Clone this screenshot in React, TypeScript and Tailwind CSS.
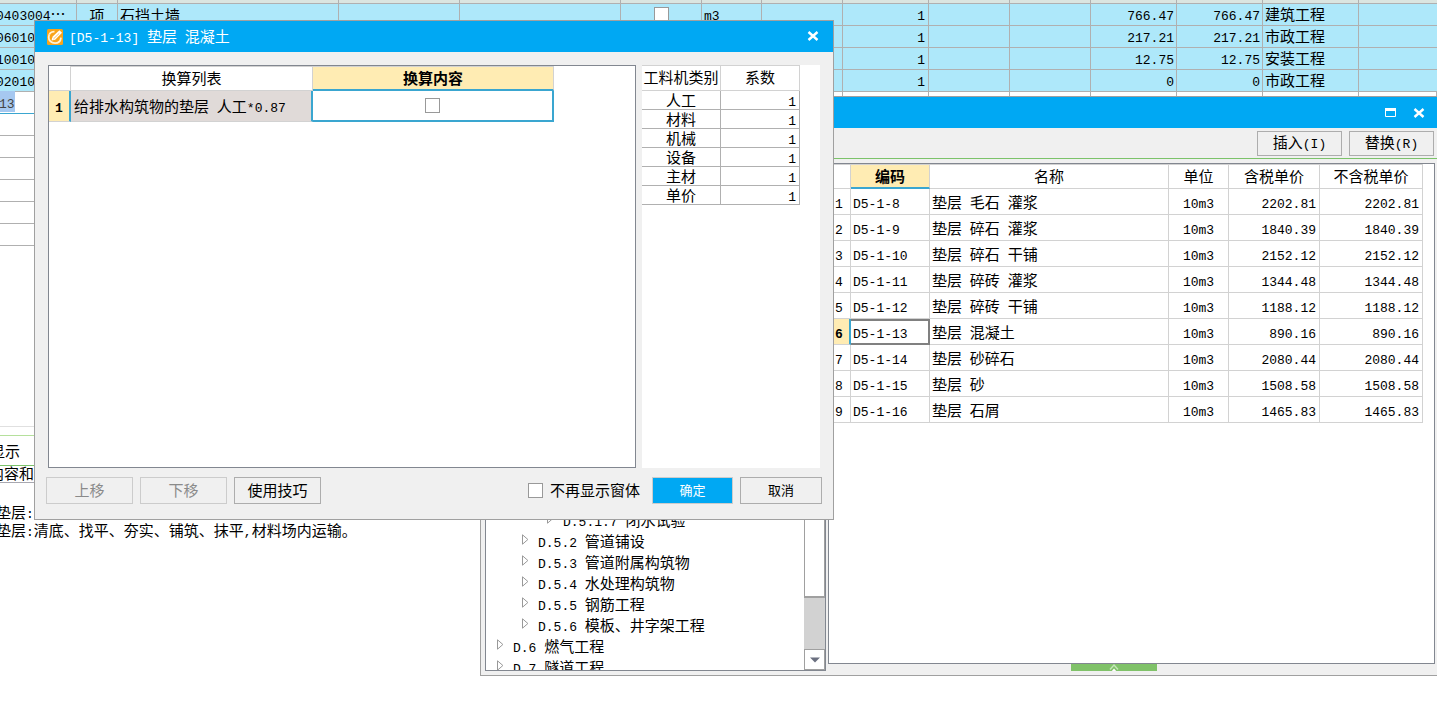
import React from "react";

/** Sets Latin runs in a half-width face so that they keep the pitch of the Chinese text. */
function T({ children }: { children: string }) {
  const runs = children.match(/[\x20-\x7e]+|[^\x20-\x7e]+/g) ?? [];
  return (
    <span className="whitespace-pre">
      {runs.map((run, i) =>
        /^[\x20-\x7e]/.test(run) ? (
          <span key={i} className="font-['Liberation_Mono',monospace] text-[13px] leading-none">
            {run}
          </span>
        ) : (
          run
        )
      )}
    </span>
  );
}

function CloseIcon() {
  return (
    <svg width="12" height="10" viewBox="0 0 12 10" fill="none" stroke="#fff" strokeWidth="2.4">
      <path d="M1.5 1 L10.5 9 M10.5 1 L1.5 9" />
    </svg>
  );
}

type SheetRow = {
  code: string;
  kind?: string;
  name?: string;
  check?: boolean;
  unit?: string;
  qty: string;
  price: string;
  total: string;
  type: string;
};

const sheetRows: SheetRow[] = [
  { code: "0403004⋯", kind: "项", name: "石挡土墙", check: true, unit: "m3", qty: "1", price: "766.47", total: "766.47", type: "建筑工程" },
  { code: "06010", qty: "1", price: "217.21", total: "217.21", type: "市政工程" },
  { code: "10010", qty: "1", price: "12.75", total: "12.75", type: "安装工程" },
  { code: "02010", qty: "1", price: "0", total: "0", type: "市政工程" },
];

const emptyCells = Array.from({ length: 14 }, (_, i) => i);

function Worksheet() {
  const cell = "h-[22px] overflow-hidden border-r border-b border-[#b0b0b0] p-0";
  return (
    <table className="w-full table-fixed border-separate border-spacing-0 text-[15px] leading-4">
      <colgroup>
        <col className="w-[77px]" />
        <col className="w-[41px]" />
        <col className="w-[221px]" />
        <col className="w-[121px]" />
        <col className="w-[161px]" />
        <col className="w-[81px]" />
        <col className="w-[60px]" />
        <col className="w-[81px]" />
        <col className="w-[86px]" />
        <col className="w-[81px]" />
        <col className="w-[81px]" />
        <col className="w-[86px]" />
        <col className="w-[86px]" />
        <col className="w-[96px]" />
        <col />
      </colgroup>
      <tbody>
        <tr className="bg-[#dbe5e0]">
          {emptyCells.map((i) => (
            <td key={i} className="h-1 border-r border-b border-[#b0b0b0] p-0" />
          ))}
          <td className="h-1 border-b border-[#b0b0b0] p-0" />
        </tr>
        {sheetRows.map((r) => (
          <tr key={r.code} className="bg-[#aee8fa]">
            <td className={cell}>
              <div className="-ml-1">
                <T>{r.code}</T>
              </div>
            </td>
            <td className={`${cell} text-center`}>{r.kind}</td>
            <td className={`${cell} pl-0.5`}>{r.name}</td>
            <td className={cell} />
            <td className={cell} />
            <td className={cell}>
              {r.check && (
                <input
                  type="checkbox"
                  aria-label="选择"
                  className="mx-auto block size-[15px] appearance-none border border-[#999] bg-white"
                />
              )}
            </td>
            <td className={`${cell} pl-0.5`}>
              <T>{r.unit ?? ""}</T>
            </td>
            <td className={cell} />
            <td className={`${cell} pr-[3px] text-right`}>
              <T>{r.qty}</T>
            </td>
            <td className={cell} />
            <td className={cell} />
            <td className={`${cell} pr-0.5 text-right`}>
              <T>{r.price}</T>
            </td>
            <td className={`${cell} pr-0.5 text-right`}>
              <T>{r.total}</T>
            </td>
            <td className={`${cell} pb-0.5 pl-0.5`}>{r.type}</td>
            <td className="h-[22px] border-b border-[#b0b0b0] p-0" />
          </tr>
        ))}
        <tr>
          <td className="h-[22px] border-r border-b border-r-[#b0b0b0] border-b-[#3aa6d0] p-0">
            <span className="-ml-px bg-[#a6c8f0] text-[#444]">
              <T>13</T>
            </span>
          </td>
          {emptyCells.map((i) => (
            <td key={i} className={cell} />
          ))}
        </tr>
        {[1, 2, 3, 4, 5, 6].map((n) => (
          <tr key={n}>
            <td className={cell} />
            {emptyCells.map((i) => (
              <td key={i} className={cell} />
            ))}
          </tr>
        ))}
      </tbody>
    </table>
  );
}

function WorkNotes() {
  return (
    <div className="w-[480px] text-[15px]">
      <div className="h-[181px] border-b border-[#e0e0e0]" />
      <div className="h-[9px] border-b border-[#b5e09c]" />
      <div className="flex h-[30px] items-center border-b border-[#7cc36a] pt-0.5">
        <span className="-ml-2.5">显示</span>
      </div>
      <div className="flex h-[17px] items-center border-b border-[#a8a8b0] pb-1 leading-none">
        <span className="-ml-[11px]">内容和</span>
      </div>
      <div className="-ml-1 pt-5 leading-[17px]">
        <p>
          <T>垫层:</T>
        </p>
        <p>
          <T>垫层:清底、找平、夯实、铺筑、抹平,材料场内运输。</T>
        </p>
      </div>
    </div>
  );
}

const treeNodes = [
  { code: "D.5.1.7", label: "闭水试验", indent: "pl-[61px]" },
  { code: "D.5.2", label: "管道铺设", indent: "pl-9" },
  { code: "D.5.3", label: "管道附属构筑物", indent: "pl-9" },
  { code: "D.5.4", label: "水处理构筑物", indent: "pl-9" },
  { code: "D.5.5", label: "钢筋工程", indent: "pl-9" },
  { code: "D.5.6", label: "模板、井字架工程", indent: "pl-9" },
  { code: "D.6", label: "燃气工程", indent: "pl-[11px]" },
  { code: "D.7", label: "隧道工程", indent: "pl-[11px]" },
];

function ChapterTree() {
  return (
    <div className="flex w-[341px] border border-[#828790] bg-white">
      <div className="flex min-w-0 flex-1 flex-col justify-end overflow-hidden">
        <ul className="-mb-2">
          {treeNodes.map((n) => (
            <li key={n.code} className={`flex h-[21px] items-center gap-[9px] pb-0.5 leading-5 ${n.indent}`}>
              <svg width="7" height="11" viewBox="0 0 7 11" fill="none" stroke="#999" className="mb-0.5 shrink-0">
                <path d="M0.5 0.8 V10.2 L5.9 5.5 Z" />
              </svg>
              <T>{`${n.code} ${n.label}`}</T>
            </li>
          ))}
        </ul>
      </div>
      <div className="flex w-[21px] flex-col bg-[#d2d2d2]">
        <div className="flex-1 border border-b-2 border-[#a0a0a0] bg-white" />
        <div className="h-[51px]" />
        <button type="button" aria-label="向下滚动" className="grid h-[21px] place-items-center border border-[#a0a0a0] bg-white">
          <svg width="10" height="6" viewBox="0 0 10 6" fill="#6b7080">
            <path d="M0 0.5 H10 L5 5.5 Z" />
          </svg>
        </button>
      </div>
    </div>
  );
}

const quotas = [
  ["D5-1-8", "垫层 毛石 灌浆", "2202.81"],
  ["D5-1-9", "垫层 碎石 灌浆", "1840.39"],
  ["D5-1-10", "垫层 碎石 干铺", "2152.12"],
  ["D5-1-11", "垫层 碎砖 灌浆", "1344.48"],
  ["D5-1-12", "垫层 碎砖 干铺", "1188.12"],
  ["D5-1-13", "垫层 混凝土", "890.16"],
  ["D5-1-14", "垫层 砂碎石", "2080.44"],
  ["D5-1-15", "垫层 砂", "1508.58"],
  ["D5-1-16", "垫层 石屑", "1465.83"],
];

function QuotaTable() {
  const th = "h-[25px] border-r border-y border-[#d2d2d2] p-0 pb-0.5 font-normal";
  const td = "h-[26px] border-r border-b border-[#d2d2d2] p-0";
  return (
    <table className="w-full table-fixed border-separate border-spacing-0 leading-5">
      <colgroup>
        <col className="w-[22px]" />
        <col className="w-[79px]" />
        <col />
        <col className="w-[60px]" />
        <col className="w-[91px]" />
        <col className="w-[103px]" />
      </colgroup>
      <thead>
        <tr>
          <th className={th} />
          <th className="h-[25px] border-t border-r border-b-2 border-[#d2d2d2] border-b-[#3aa6d0] bg-[#ffecb3] p-0 font-bold">编码</th>
          <th className={th}>名称</th>
          <th className={th}>单位</th>
          <th className={th}>含税单价</th>
          <th className={th}>不含税单价</th>
        </tr>
      </thead>
      <tbody>
        {quotas.map(([code, name, price], i) => {
          const current = code === "D5-1-13";
          return (
            <tr key={code}>
              <td
                className={
                  current
                    ? "h-[26px] border-r-2 border-b border-r-[#3aa6d0] border-b-[#d2d2d2] bg-[#ffecb3] p-0 pl-1.5 font-bold"
                    : `${td} pl-1.5`
                }
              >
                <T>{String(i + 1)}</T>
              </td>
              <td className={current ? "h-[26px] border-2 border-l-0 border-[#808080] p-0 pl-0.5" : `${td} pl-0.5`}>
                <T>{code}</T>
              </td>
              <td className={`${td} pl-0.5`}>
                <T>{name}</T>
              </td>
              <td className={`${td} text-center`}>
                <T>10m3</T>
              </td>
              <td className={`${td} pr-[3px] text-right`}>
                <T>{price}</T>
              </td>
              <td className={`${td} pr-[3px] text-right`}>
                <T>{price}</T>
              </td>
            </tr>
          );
        })}
      </tbody>
    </table>
  );
}

function QuotaWindow() {
  return (
    <section className="absolute top-24 right-0 left-[480px] border border-r-0 border-[#a0a0a0] bg-[#f0f0f0] text-[15px]">
      <header className="flex h-[31px] items-center justify-end gap-[17px] bg-[#00a8f3] pr-3">
        <button type="button" aria-label="最大化">
          <svg width="11" height="9" viewBox="0 0 11 9" fill="none" stroke="#fff">
            <path d="M0.5 0.5 H10.5 V8.5 H0.5 Z" />
            <path d="M0 1.5 H11" strokeWidth="3" />
          </svg>
        </button>
        <button type="button" aria-label="关闭">
          <CloseIcon />
        </button>
      </header>
      <div className="flex h-[31px] items-center justify-end gap-[7px] border-b border-[#7cc36a] pr-[3px]">
        <button type="button" className="h-[25px] w-[85px] border border-[#adadad] pb-0.5 leading-5">
          <T>插入(I)</T>
        </button>
        <button type="button" className="h-[25px] w-[85px] border border-[#adadad] pb-0.5 leading-5">
          <T>替换(R)</T>
        </button>
      </div>
      <div className="flex gap-0.5 pt-1 pl-1">
        <ChapterTree />
        <div className="min-w-0 flex-1 pr-0.5">
          <div className="h-[501px] border border-[#828790] bg-white pr-[11px]">
            <QuotaTable />
          </div>
          <button type="button" aria-label="展开" className="ml-[243px] grid h-[7px] w-[86px] place-items-center bg-[#80c269]">
            <svg width="10" height="7" viewBox="0 0 10 7" fill="none">
              <path d="M1 5.5 L5 1 L9 5.5" stroke="#c4e5b8" strokeWidth="1.4" />
              <path d="M2.8 7 L5 4.6 L7.2 7 Z" fill="#fff" />
            </svg>
          </button>
        </div>
      </div>
      <div className="h-1" />
    </section>
  );
}

function ConversionTable() {
  return (
    <div className="min-w-0 flex-1 border border-[#828790] bg-white">
      <table className="w-[505px] table-fixed border-separate border-spacing-0 leading-5">
        <colgroup>
          <col className="w-[22px]" />
          <col className="w-[242px]" />
          <col className="w-[241px]" />
        </colgroup>
        <thead>
          <tr>
            <th className="h-[25px] border-r border-b border-[#d2d2d2] p-0" />
            <th className="h-[25px] border-r border-y border-[#d2d2d2] p-0 pb-0.5 font-normal">换算列表</th>
            <th className="h-[25px] border-t border-r border-b-2 border-[#d2d2d2] border-b-[#3aa6d0] bg-[#ffecb3] p-0 font-bold">换算内容</th>
          </tr>
        </thead>
        <tbody>
          <tr>
            <td className="h-[31px] border-r-2 border-b border-r-[#3aa6d0] border-b-[#d2d2d2] bg-[#ffecb3] p-0 text-center font-bold">
              <T>1</T>
            </td>
            <td className="h-[31px] border-r-2 border-b border-r-[#3aa6d0] border-b-[#d2d2d2] bg-[#e0dad8] p-0 pl-[3px]">
              <T>给排水构筑物的垫层 人工*0.87</T>
            </td>
            <td className="h-[31px] border-r-2 border-b-2 border-[#3aa6d0] p-0">
              <input
                type="checkbox"
                aria-label="给排水构筑物的垫层"
                className="mx-auto block size-[15px] appearance-none border border-[#999] bg-white"
              />
            </td>
          </tr>
        </tbody>
      </table>
    </div>
  );
}

function FactorTable() {
  return (
    <div className="h-[403px] w-[178px] bg-white">
      <table className="w-[158px] table-fixed border-separate border-spacing-0 leading-[18px]">
        <thead>
          <tr>
            <th className="h-[26px] border-r border-y border-[#d2d2d2] p-0 pb-0.5 font-normal">工料机类别</th>
            <th className="h-[26px] border-r border-y border-[#d2d2d2] p-0 pb-0.5 font-normal">系数</th>
          </tr>
        </thead>
        <tbody>
          {["人工", "材料", "机械", "设备", "主材", "单价"].map((name) => (
            <tr key={name}>
              <td className="h-[19px] border-r border-b border-[#b0b0b0] p-0 text-center">{name}</td>
              <td className="h-[19px] border-r border-b border-[#b0b0b0] p-0 pr-[3px] text-right">
                <T>1</T>
              </td>
            </tr>
          ))}
        </tbody>
      </table>
    </div>
  );
}

function ConversionDialog() {
  return (
    <section
      role="dialog"
      aria-labelledby="conversion-title"
      className="absolute top-5 left-[34px] w-[800px] border border-[#a0a0a0] bg-[#f0f0f0] text-[15px]"
    >
      <header className="flex h-[31px] items-center bg-[#00a8f3] pr-[14px] pl-3 text-white">
        <svg width="16" height="16" viewBox="0 0 16 16">
          <rect width="16" height="16" rx="1.5" fill="#f9a41a" />
          <path d="M7.5 2.6 C4.2 2.4 1.8 4.6 1.7 8 C1.6 11.6 4.2 14.2 8 14.2 C11.6 14.2 13.6 12 14 8.6" fill="none" stroke="#fff3d6" strokeWidth="1.8" />
          <path d="M4.6 11.6 L5.2 8 L12.4 1.2 L15 3.8 L8.2 10.8 Z" fill="#fff" />
          <path d="M2.8 5.6 L5.8 8.6 M6.4 10 L12.2 4.4" stroke="#f9a41a" strokeWidth="0.7" />
        </svg>
        <h1 id="conversion-title" className="flex-1 pb-px pl-1.5">
          <T>[D5-1-13] 垫层 混凝土</T>
        </h1>
        <button type="button" aria-label="关闭" className="pb-0.5">
          <CloseIcon />
        </button>
      </header>
      <div className="flex gap-1.5 pt-[13px] pr-[13px] pl-[13px]">
        <ConversionTable />
        <FactorTable />
      </div>
      <footer className="flex items-center gap-[7px] pt-[9px] pr-[11px] pb-[15px] pl-[11px] leading-5">
        <button type="button" disabled className="h-[27px] w-[87px] border border-[#cccccc] pb-0.5 text-[#8a8a8a]">
          上移
        </button>
        <button type="button" disabled className="h-[27px] w-[87px] border border-[#cccccc] pb-0.5 text-[#8a8a8a]">
          下移
        </button>
        <button type="button" className="h-[27px] w-[87px] border border-[#adadad] pb-0.5">
          使用技巧
        </button>
        <label className="mr-[5px] ml-auto flex items-center gap-[7px]">
          <input type="checkbox" className="size-[15px] appearance-none border border-[#999] bg-white" />
          <span className="pb-0.5">不再显示窗体</span>
        </label>
        <button type="button" className="h-[27px] w-[81px] border border-[#cccccc] bg-[#00a8f3] pb-0.5 text-[13px] text-white">
          确定
        </button>
        <button type="button" className="h-[27px] w-[82px] border border-[#adadad] pb-0.5 text-[13px]">
          取消
        </button>
      </footer>
    </section>
  );
}

export default function App() {
  return (
    <main className="relative min-h-screen overflow-hidden bg-white font-['Noto_Sans_CJK_SC',sans-serif] text-black">
      <Worksheet />
      <WorkNotes />
      <QuotaWindow />
      <ConversionDialog />
    </main>
  );
}
